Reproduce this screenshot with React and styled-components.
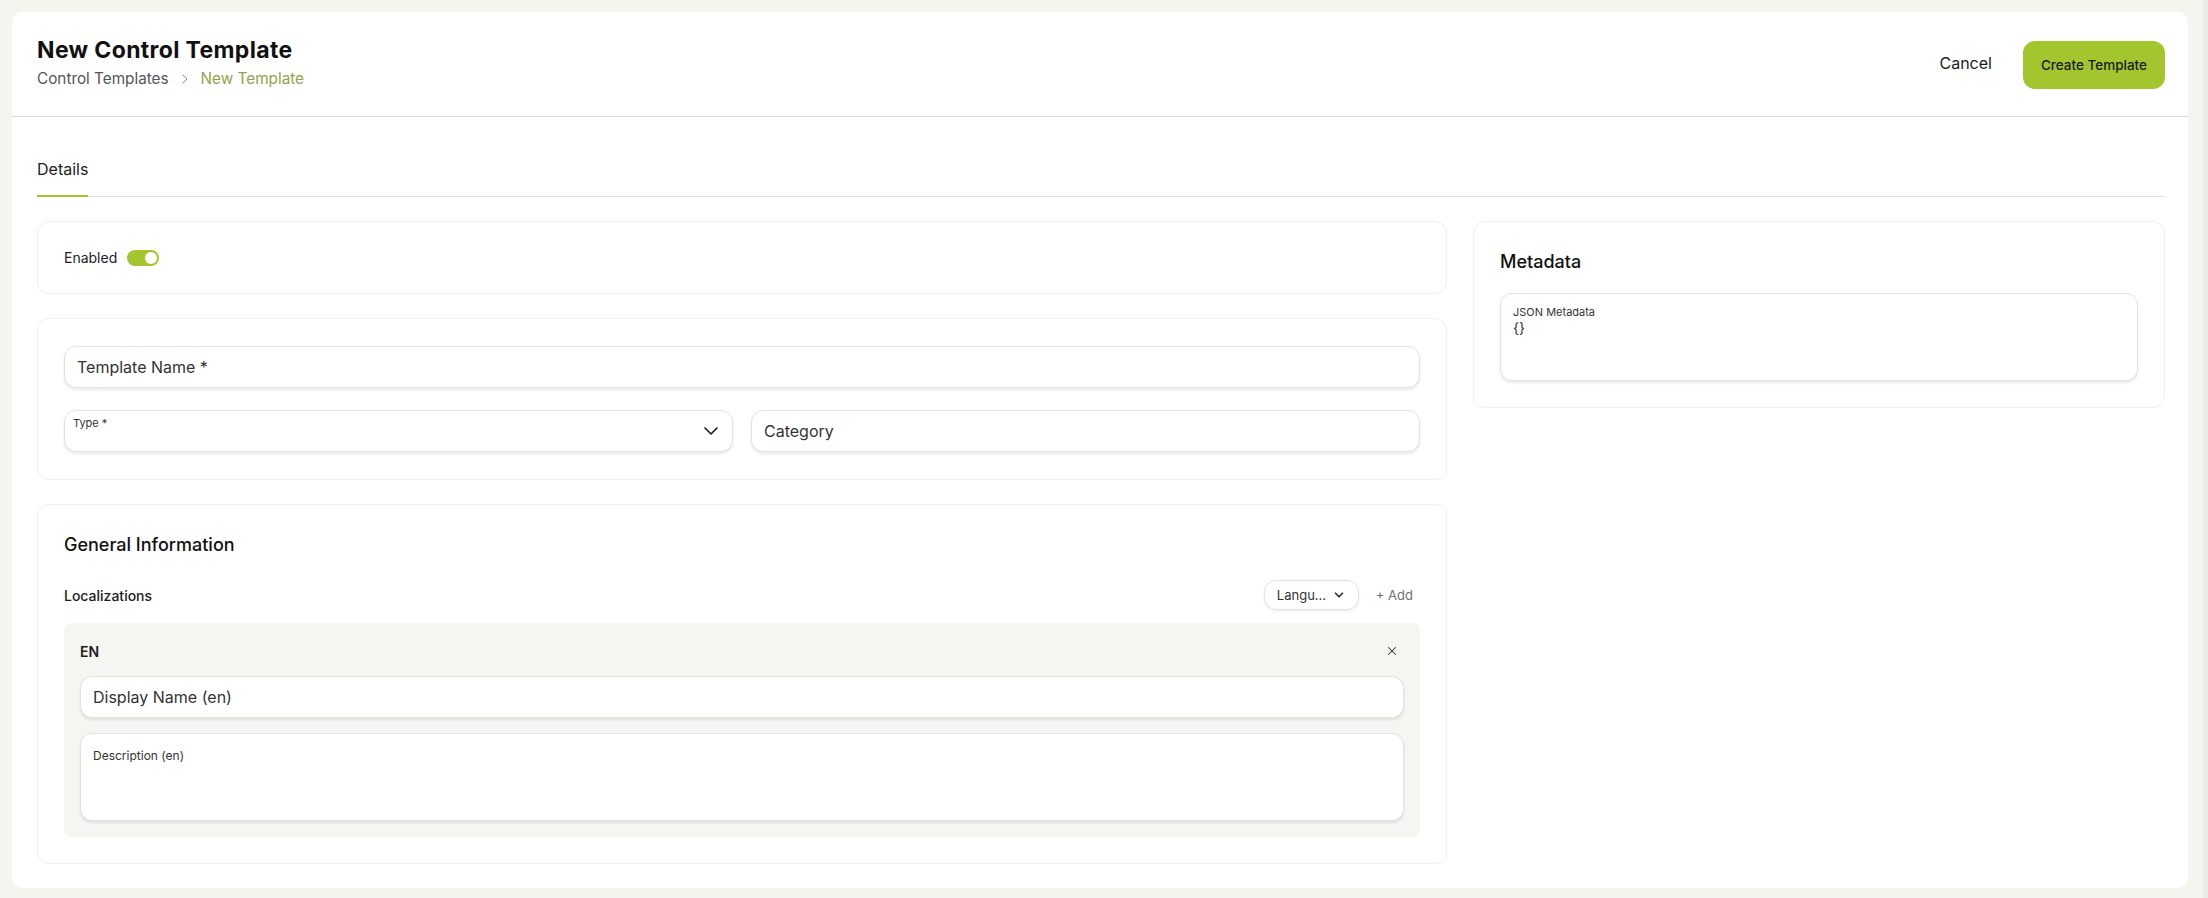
import React from 'react';
import styled, { createGlobalStyle } from 'styled-components';
import { ChevronDown, ChevronRight, X } from 'lucide-react';

const GlobalStyle = createGlobalStyle`
    * {
        box-sizing: border-box;
    }

    body {
        margin: 0;
        background: #f5f5f0;
        font-family: Inter, "Noto Sans", sans-serif;
        color: #1c1c1c;
    }
`;

const Page = styled.div`
    display: flex;
    min-height: 100vh;
`;

const Shell = styled.div`
    flex: 1;
    padding: 12px 15px 10px 12px;
`;

const ScrollTrack = styled.div`
    width: 5px;
    background: #ebebe6;
`;

const Sheet = styled.main`
    background: #fff;
    border-radius: 10px;
`;

const Header = styled.header`
    display: flex;
    align-items: center;
    justify-content: space-between;
    padding: 24px 23px 26px 25px;
    border-bottom: 1px solid #dcdcd5;
`;

const Title = styled.h1`
    margin: 0;
    font-size: 23px;
    line-height: 28px;
    font-weight: 700;
    letter-spacing: 0.35px;
    color: #111;
`;

const Breadcrumb = styled.nav`
    display: flex;
    align-items: center;
    gap: 8px;
    margin-top: 4px;
    font-size: 15.3px;
    line-height: 22px;
    color: #555;

    svg {
        color: #8a8a8a;
    }
`;

const Crumb = styled.span`
    color: ${({ $current }) => ($current ? '#8ea548' : '#555')};
`;

const Actions = styled.div`
    display: flex;
    align-items: center;
    gap: 31px;
    padding-top: 4px;
`;

const GhostButton = styled.button`
    border: none;
    background: none;
    padding: 0;
    margin-top: -4px;
    font-family: inherit;
    font-size: 16px;
    color: #1c1c1c;
    cursor: pointer;
`;

const PrimaryButton = styled.button`
    height: 48px;
    padding: 0 18px;
    border: none;
    border-radius: 12px;
    background: #a3c52e;
    font-family: inherit;
    font-size: 13.5px;
    font-weight: 500;
    color: #1a1a1a;
    cursor: pointer;
`;

const Body = styled.div`
    padding: 40px 23px 24px 25px;
`;

const TabBar = styled.div`
    display: flex;
    border-bottom: 1px solid #e2e2dd;
`;

const Tab = styled.div`
    padding-bottom: 14px;
    margin-bottom: -1px;
    font-size: 16px;
    line-height: 24px;
    color: #222;
    border-bottom: 2px solid ${({ $active }) => ($active ? '#a3c52e' : 'transparent')};
`;

const Columns = styled.div`
    display: grid;
    grid-template-columns: 1fr 692px;
    gap: 26px;
    margin-top: 24px;
    align-items: start;
`;

const Stack = styled.div`
    display: flex;
    flex-direction: column;
    gap: 24px;
`;

const Card = styled.section`
    background: #fff;
    border: 1px solid #efefeb;
    border-radius: 12px;
    padding: ${({ $pad }) => $pad || '26px'};
`;

const CardTitle = styled.h2`
    margin: 0;
    font-size: 18px;
    line-height: 28px;
    font-weight: 500;
    color: #111;
`;

const ToggleRow = styled.label`
    display: flex;
    align-items: center;
    gap: 10px;
    min-height: 21px;
    font-size: 14px;
    color: #222;
`;

const Switch = styled.span`
    display: flex;
    align-items: center;
    justify-content: ${({ $on }) => ($on ? 'flex-end' : 'flex-start')};
    width: 32px;
    height: 16px;
    padding: 2px;
    border-radius: 8px;
    background: ${({ $on }) => ($on ? '#a3c52e' : '#d4d4cf')};

    &::after {
        content: '';
        width: 12px;
        height: 12px;
        border-radius: 50%;
        background: #fff;
    }
`;

const FormGrid = styled.div`
    display: grid;
    grid-template-columns: 1fr 1fr;
    column-gap: 18px;
    row-gap: 22px;
`;

const Field = styled.div`
    position: relative;
    grid-column: ${({ $span }) => ($span ? '1 / -1' : 'auto')};
    display: flex;
    flex-direction: column;
    justify-content: ${({ $tall }) => ($tall ? 'flex-start' : 'center')};
    height: ${({ $tall }) => ($tall ? '88px' : '42px')};
    padding: ${({ $tall }) => ($tall ? '14px 12px' : '0 12px')};
    background: #fff;
    border: 1.5px solid #e3e3de;
    border-radius: 12px;
    box-shadow: 0 2px 3px rgba(0, 0, 0, 0.09);
`;

const TextInput = styled.input`
    width: 100%;
    border: none;
    outline: none;
    padding: 0;
    background: transparent;
    font-family: inherit;
    font-size: 16px;
    color: #333;

    &::placeholder {
        color: #333;
    }
`;

const SmallLabel = styled.span`
    font-size: ${({ $size }) => $size || '12px'};
    line-height: 16px;
    color: #333;
`;

const SelectBox = styled(Field)`
    justify-content: flex-start;
    padding: 4px 14px 0 8px;

    svg {
        position: absolute;
        right: 9px;
        top: 8px;
        color: #222;
    }
`;

const SectionRow = styled.div`
    display: flex;
    align-items: center;
    justify-content: space-between;
    margin-top: 21px;
    height: 30px;
`;

const SectionLabel = styled.span`
    font-size: 14px;
    font-weight: 500;
    color: #1c1c1c;
`;

const RowTools = styled.div`
    display: flex;
    align-items: center;
    gap: 10px;
`;

const MiniSelect = styled.div`
    display: flex;
    align-items: center;
    justify-content: space-between;
    width: 95px;
    height: 30px;
    padding: 0 12px 0 12px;
    border: 1.5px solid #e3e3de;
    border-radius: 12px;
    box-shadow: 0 1px 3px rgba(0, 0, 0, 0.08);
    font-size: 13px;
    color: #333;
    white-space: nowrap;
`;

const LinkButton = styled.button`
    border: none;
    background: none;
    padding: 4px 7px;
    font-family: inherit;
    font-size: 13px;
    color: #707070;
    cursor: pointer;
`;

const LocalePanel = styled.div`
    display: flex;
    flex-direction: column;
    gap: 15px;
    margin-top: 13px;
    padding: 16px;
    background: #f5f5f1;
    border-radius: 8px;
`;

const LocaleHead = styled.div`
    display: flex;
    align-items: center;
    justify-content: space-between;
    height: 24px;
    margin-bottom: -2px;
    font-size: 14px;
    font-weight: 600;
    color: #1c1c1c;
`;

const IconButton = styled.button`
    display: flex;
    align-items: center;
    justify-content: center;
    width: 24px;
    height: 24px;
    border: none;
    background: none;
    padding: 0;
    color: #333;
    cursor: pointer;
`;

const MetaField = styled(Field)`
    margin-top: 17px;
    padding: 10px 12px;
`;

const Code = styled.span`
    font-size: 14px;
    line-height: 16px;
    color: #333;
`;

export default function App() {
    return (
        <Page>
            <GlobalStyle />
            <Shell>
                <Sheet>
                    <Header>
                        <div>
                            <Title>New Control Template</Title>
                            <Breadcrumb>
                                <Crumb>Control Templates</Crumb>
                                <ChevronRight size={16} strokeWidth={1.5} />
                                <Crumb $current>New Template</Crumb>
                            </Breadcrumb>
                        </div>
                        <Actions>
                            <GhostButton>Cancel</GhostButton>
                            <PrimaryButton>Create Template</PrimaryButton>
                        </Actions>
                    </Header>

                    <Body>
                        <TabBar>
                            <Tab $active>Details</Tab>
                        </TabBar>

                        <Columns>
                            <Stack>
                                <Card $pad="25px 26px">
                                    <ToggleRow>
                                        Enabled
                                        <Switch $on />
                                    </ToggleRow>
                                </Card>

                                <Card $pad="27px 26px">
                                    <FormGrid>
                                        <Field $span>
                                            <TextInput placeholder="Template Name *" />
                                        </Field>
                                        <SelectBox>
                                            <SmallLabel $size="11px">Type *</SmallLabel>
                                            <ChevronDown size={24} strokeWidth={1.75} />
                                        </SelectBox>
                                        <Field>
                                            <TextInput placeholder="Category" />
                                        </Field>
                                    </FormGrid>
                                </Card>

                                <Card>
                                    <CardTitle>General Information</CardTitle>
                                    <SectionRow>
                                        <SectionLabel>Localizations</SectionLabel>
                                        <RowTools>
                                            <MiniSelect>
                                                Langu…
                                                <ChevronDown size={14} strokeWidth={3} />
                                            </MiniSelect>
                                            <LinkButton>+ Add</LinkButton>
                                        </RowTools>
                                    </SectionRow>
                                    <LocalePanel>
                                        <LocaleHead>
                                            EN
                                            <IconButton>
                                                <X size={14} strokeWidth={1.75} />
                                            </IconButton>
                                        </LocaleHead>
                                        <Field>
                                            <TextInput placeholder="Display Name (en)" />
                                        </Field>
                                        <Field $tall>
                                            <SmallLabel>Description (en)</SmallLabel>
                                        </Field>
                                    </LocalePanel>
                                </Card>
                            </Stack>

                            <Card>
                                <CardTitle>Metadata</CardTitle>
                                <MetaField $tall>
                                    <SmallLabel $size="11px">JSON Metadata</SmallLabel>
                                    <Code>{'{}'}</Code>
                                </MetaField>
                            </Card>
                        </Columns>
                    </Body>
                </Sheet>
            </Shell>
            <ScrollTrack />
        </Page>
    );
}
